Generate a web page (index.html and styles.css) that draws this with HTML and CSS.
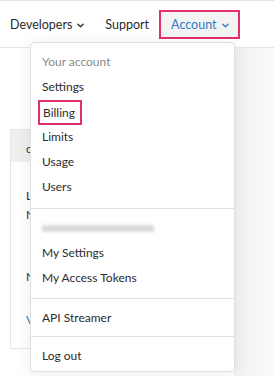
FILE: index.html
```html
<!DOCTYPE html>
<html lang="en">

<head>
    <meta charset="UTF-8">
    <meta name="viewport" content="width=device-width, initial-scale=1.0">
    <title>Account menu</title>
    <link rel="stylesheet" href="styles.css">
</head>

<body>
    <header class="topbar">
        <nav class="nav">
            <a class="nav-item">Developers
                <svg class="chevron" viewBox="0 0 8 5"><path d="M1 1l3 3 3-3"/></svg>
            </a>
            <a class="nav-item support">Support</a>
            <a class="nav-item account">Account
                <svg class="chevron" viewBox="0 0 8 5"><path d="M1 1l3 3 3-3"/></svg>
            </a>
        </nav>
    </header>

    <main class="page">
        <div class="side-shade"></div>
        <div class="card">
            <div class="card-head">c</div>
            <div class="card-body">
                <p class="row one">L</p>
                <p class="row">N</p>
                <p class="row gap">N</p>
                <p class="row link">V</p>
            </div>
        </div>
    </main>

    <!-- dropdown sits over the page -->
    <div class="dropdown">
        <ul class="menu-section">
            <li class="menu-label">Your account</li>
            <li>Settings</li>
            <li><span class="highlight">Billing</span></li>
            <li>Limits</li>
            <li>Usage</li>
            <li>Users</li>
        </ul>
        <ul class="menu-section">
            <li><span class="blurred"></span></li>
            <li>My Settings</li>
            <li>My Access Tokens</li>
        </ul>
        <ul class="menu-section">
            <li>API Streamer</li>
        </ul>
        <ul class="menu-section">
            <li>Log out</li>
        </ul>
    </div>
</body>

</html>
```

FILE: styles.css
```css
body {
    margin: 0;
    font-family: 'Lato', 'Noto Sans', sans-serif;
    font-size: 12px;
    color: #333;
    background-color: #fff;
    height: 376px;
    overflow: hidden;
    position: relative;
}

.topbar {
    border-top: 1px solid #e4e4e4;
    border-bottom: 1px solid #e6e6e6;
    box-sizing: border-box;
    height: 48px;
}

.nav {
    display: flex;
    align-items: center;
    height: 100%;
    padding-left: 10px;
}

.nav-item {
    display: flex;
    align-items: center;
    color: #2b2b2b;
    font-size: 12.5px;
}

.support {
    margin-left: 21px;
}

.account {
    margin-left: 10px;
    margin-top: 1px;
    height: 29px;
    box-sizing: border-box;
    padding: 0 9px 0 10px;
    border: 2px solid #e2306c;
    background-color: #f3f3f3;
    color: #2f7cc0;
}

.chevron {
    width: 7px;
    height: 5px;
    margin-left: 5px;
    margin-top: 2px;
    fill: none;
    stroke: currentColor;
    stroke-width: 1.5;
    stroke-linecap: round;
    stroke-linejoin: round;
}

.page {
    display: flex;
    height: 328px;
    position: relative;
}

.side-shade {
    position: absolute;
    right: 0;
    top: 0;
    width: 40px;
    height: 100%;
    background: linear-gradient(to right, #f1f1f1, #fafafa);
}

.card {
    margin: 81px 0 0 10px;
    width: 200px;
    height: 218px;
    border: 1px solid #e6e6e6;
    background-color: #fff;
}

.card-head {
    height: 32px;
    background-color: #efefef;
    padding-left: 15px;
    line-height: 38px;
}

.card-body {
    padding: 27px 0 0 15px;
}

.row {
    margin: 0 0 6px;
    line-height: 13px;
}

.row.gap {
    margin-top: 49px;
}

.row.link {
    margin-top: 30px;
    color: #2f7cc0;
}

.dropdown {
    position: absolute;
    left: 30px;
    top: 42px;
    width: 205px;
    height: 330px;
    box-sizing: border-box;
    background-color: #fff;
    border: 1px solid #e0e0e0;
    border-radius: 4px;
    box-shadow: 0 2px 16px rgba(0, 0, 0, 0.08);
}

.menu-section {
    list-style: none;
    margin: 0;
    padding: 6px 0;
    border-bottom: 1px solid #e2e2e2;
}

.menu-section:first-child {
    padding-top: 6px;
    padding-bottom: 9px;
}

.menu-section:nth-child(2) {
    padding-bottom: 8px;
}

.menu-section:last-child {
    border-bottom: none;
}

.menu-section li {
    height: 25px;
    line-height: 25px;
    padding-left: 11px;
    color: #2b2b2b;
}

.menu-section .menu-label {
    color: #8a8a8a;
}

.highlight {
    display: inline-block;
    margin-left: -4px;
    padding: 0 5px 0 3px;
    line-height: 21px;
    vertical-align: middle;
    border: 2px solid #e2306c;
}

.blurred {
    display: inline-block;
    width: 112px;
    height: 7px;
    background-color: #dadada;
    filter: blur(1.5px);
    vertical-align: middle;
}
```
